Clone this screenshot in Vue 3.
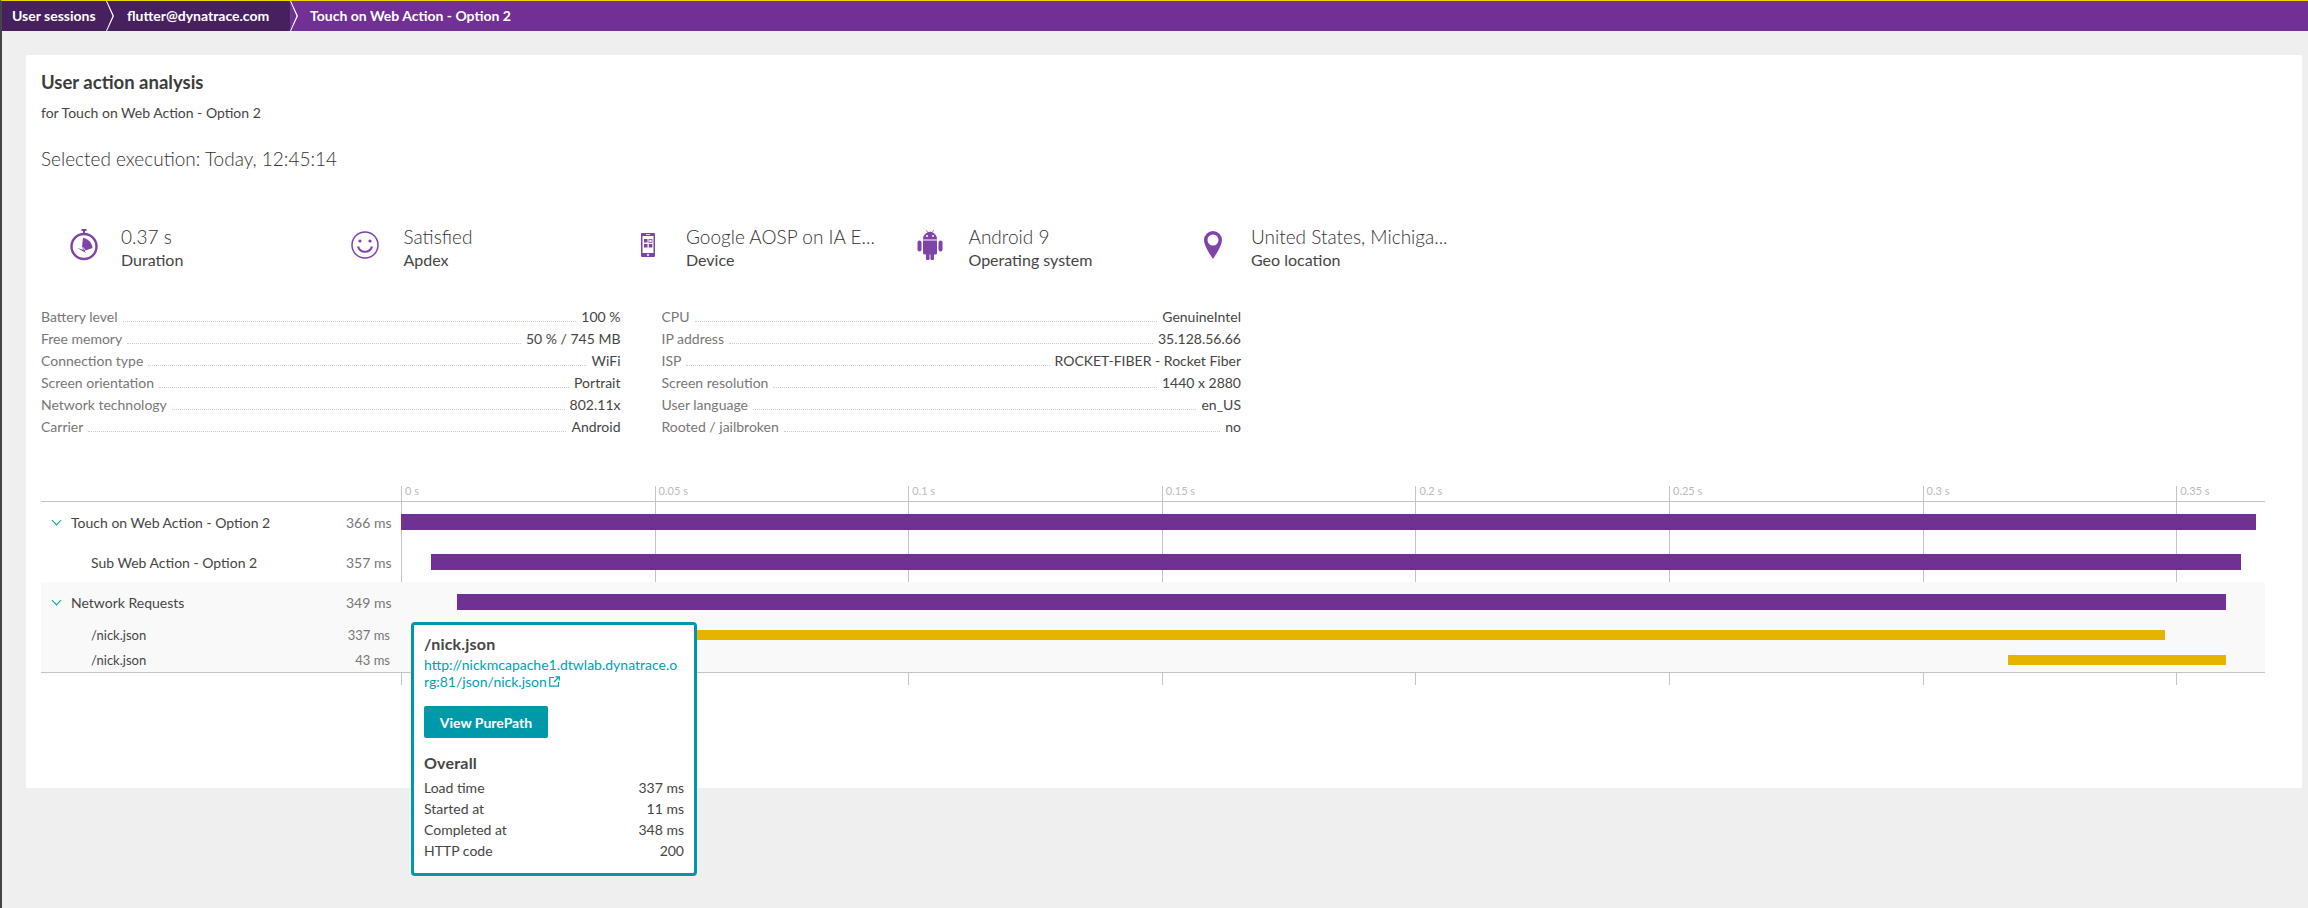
<template>
  <div class="page">
    <nav class="crumbs">
      <div class="crumb dark first">User sessions<span class="chev"></span></div>
      <div class="crumb dark second">flutter@dynatrace.com<span class="chev"></span></div>
      <div class="crumb current">Touch on Web Action - Option 2</div>
    </nav>

    <main class="card">
      <h1>User action analysis</h1>
      <p class="sub">for Touch on Web Action - Option 2</p>
      <p class="selected">Selected execution: Today, 12:45:14</p>

      <section class="metrics">
        <div class="metric">
          <div class="icon">
            <svg width="30" height="32" viewBox="0 0 30 32">
              <rect x="12.500" y="0" width="5" height="2" fill="#7f44a8" />
              <rect x="14" y="2" width="2" height="2" fill="#7f44a8" />
              <circle cx="15" cy="17.500" r="12.500" fill="none" stroke="#7f44a8" stroke-width="2.400" />
              <path d="M14 9 C19 9.500 23 13.500 23.500 19 L15 22 L13 18 Z" fill="#7f44a8" />
              <path d="M8 19 L17 24 L15 21 Z" fill="#7f44a8" />
              <path d="M13.500 18 L16.500 21.500" stroke="#fff" stroke-width=".8" />
            </svg>
          </div>
          <div>
            <div class="value">0.37 s</div>
            <div class="label">Duration</div>
          </div>
        </div>
        <div class="metric">
          <div class="icon">
            <svg width="28" height="28" viewBox="0 0 28 28" fill="none" stroke="#7f44a8" stroke-width="1.500">
              <circle cx="14" cy="14" r="13" />
              <path d="M7 15.500 C9 22.500 19 22.500 21 15.500" stroke-width="2.200" />
              <circle cx="9" cy="10" r="1.600" fill="#7f44a8" stroke="none" />
              <circle cx="19" cy="10" r="1.600" fill="#7f44a8" stroke="none" />
            </svg>
          </div>
          <div>
            <div class="value">Satisfied</div>
            <div class="label">Apdex</div>
          </div>
        </div>
        <div class="metric">
          <div class="icon">
            <svg width="14" height="24" viewBox="0 0 14 24">
              <path fill="#7f44a8" fill-rule="evenodd" d="M1 0h12a1 1 0 0 1 1 1v22a1 1 0 0 1-1 1H1a1 1 0 0 1-1-1V1a1 1 0 0 1 1-1zM1.500 3v17h11V3z" />
              <rect x="5" y="1.200" width="4" height=".8" fill="#fff" />
              <circle cx="7" cy="22" r="1" fill="#fff" />
              <rect x="3" y="6" width="3.500" height="3.500" fill="#7f44a8" />
              <rect x="8" y="6.400" width="3" height="3" fill="none" stroke="#7f44a8" stroke-width=".8" />
              <rect x="3" y="11" width="3.500" height="3.500" fill="#7f44a8" />
              <rect x="7.800" y="11" width="3.500" height="3.500" fill="#7f44a8" />
            </svg>
          </div>
          <div>
            <div class="value">Google AOSP on IA E...</div>
            <div class="label">Device</div>
          </div>
        </div>
        <div class="metric">
          <div class="icon">
            <svg width="26" height="30" viewBox="0 0 26 30" fill="#7f44a8">
              <path d="M6 9.500h14v-.5C20 6 18 3.500 15.500 2.500L17 .3l-.5-.3-1.600 2.200C13.300 1.600 12.700 1.600 11.100 2.200L9.500 0 9 .3l1.500 2.200C8 3.500 6 6 6 9z" />
              <path d="M6 10.500h14V23a1.500 1.500 0 0 1-1.500 1.500H17v4a1.800 1.800 0 0 1-3.600 0v-4h-.8v4a1.800 1.800 0 0 1-3.600 0v-4H7.500A1.500 1.500 0 0 1 6 23z" />
              <rect x="0.500" y="10.500" width="4" height="11" rx="2" />
              <rect x="21.500" y="10.500" width="4" height="11" rx="2" />
              <circle cx="10" cy="6" r="1" fill="#fff" />
              <circle cx="16" cy="6" r="1" fill="#fff" />
            </svg>
          </div>
          <div>
            <div class="value">Android 9</div>
            <div class="label">Operating system</div>
          </div>
        </div>
        <div class="metric">
          <div class="icon">
            <svg width="18" height="28" viewBox="0 0 18 28">
              <path fill="#7f44a8" fill-rule="evenodd" d="M9 0a9 9 0 0 1 9 9c0 5-5 13-9 19C5 22 0 14 0 9A9 9 0 0 1 9 0zm0 3.500a5.500 5.500 0 1 0 0 11 5.500 5.500 0 0 0 0-11z" />
            </svg>
          </div>
          <div>
            <div class="value">United States, Michiga...</div>
            <div class="label">Geo location</div>
          </div>
        </div>
      </section>

      <section class="details">
        <div class="kv-col" v-for="(col, i) in details" :key="i">
          <div class="kv" v-for="row in col" :key="row[0]">
            <span class="k">{{ row[0] }}</span>
            <span class="dots"></span>
            <span class="v">{{ row[1] }}</span>
          </div>
        </div>
      </section>

      <section class="chart">
        <div class="grid-lines">
          <div class="tick" v-for="(t, i) in ticks" :key="t" :style="{ left: i * tickStep + 'px' }">
            <span>{{ t }}</span>
          </div>
        </div>
        <div class="axis"></div>
        <div class="rows">
          <div class="row tall">
            <div class="name"><span class="caret"></span>Touch on Web Action - Option 2</div>
            <div class="ms">366 ms</div>
            <div class="track"><div class="bar purple" :style="bar(401, 2256)"></div></div>
          </div>
          <div class="row tall">
            <div class="name nested">Sub Web Action - Option 2</div>
            <div class="ms">357 ms</div>
            <div class="track"><div class="bar purple" :style="bar(431, 2241)"></div></div>
          </div>
          <div class="shaded">
            <div class="row tall">
              <div class="name"><span class="caret"></span>Network Requests</div>
              <div class="ms">349 ms</div>
              <div class="track"><div class="bar purple" :style="bar(457, 2226)"></div></div>
            </div>
            <div class="row small">
              <div class="name nested">/nick.json</div>
              <div class="ms">337 ms</div>
              <div class="track"><div class="bar yellow" :style="bar(457, 2165)"></div></div>
            </div>
            <div class="row small">
              <div class="name nested">/nick.json</div>
              <div class="ms">43 ms</div>
              <div class="track"><div class="bar yellow" :style="bar(2008, 2226)"></div></div>
            </div>
          </div>
        </div>
      </section>
    </main>

    <aside class="tip">
      <div class="tip-title">/nick.json</div>
      <a class="tip-link">http://nickmcapache1.dtwlab.dynatrace.o<br />rg:81/json/nick.json<svg class="ext" width="11" height="11" viewBox="0 0 11 11" fill="none" stroke="#00a1b2" stroke-width="1.2"><path d="M5 1.500H.8v8.700h8.700V6" /><path d="M5 6l5-5M6.500.8h3.800v3.800" /></svg></a>
      <button class="tip-btn">View PurePath</button>
      <div class="tip-title overall">Overall</div>
      <div class="tip-row" v-for="row in overall" :key="row[0]">
        <span>{{ row[0] }}</span><span>{{ row[1] }}</span>
      </div>
    </aside>
  </div>
</template>

<script setup>
const details = [
  [
    ['Battery level', '100 %'],
    ['Free memory', '50 % / 745 MB'],
    ['Connection type', 'WiFi'],
    ['Screen orientation', 'Portrait'],
    ['Network technology', '802.11x'],
    ['Carrier', 'Android']
  ],
  [
    ['CPU', 'GenuineIntel'],
    ['IP address', '35.128.56.66'],
    ['ISP', 'ROCKET-FIBER - Rocket Fiber'],
    ['Screen resolution', '1440 x 2880'],
    ['User language', 'en_US'],
    ['Rooted / jailbroken', 'no']
  ]
]

const ticks = ['0 s', '0.05 s', '0.1 s', '0.15 s', '0.2 s', '0.25 s', '0.3 s', '0.35 s']
const tickStep = 253.6

const overall = [
  ['Load time', '337 ms'],
  ['Started at', '11 ms'],
  ['Completed at', '348 ms'],
  ['HTTP code', '200']
]

// x positions are page pixels, the track starts at 401
function bar(from, to) {
  return { marginLeft: from - 401 + 'px', width: to - from + 'px' }
}
</script>

<style>
html, body {
  margin: 0;
  background: #efefef;
}
</style>

<style scoped>
.page {
  position: relative;
  height: 908px;
  overflow: hidden;
  box-sizing: border-box;
  border-top: 1px solid #f1d400;
  border-left: 2px solid #454545;
  background: #efefef;
  color: #454545;
  font-family: Lato, "Open Sans", sans-serif;
  font-size: 14px;
}

.crumbs {
  display: flex;
  height: 30px;
  background: #722f94;
  color: #fff;
  font-size: 14px;
  font-weight: 700;
  line-height: 30px;
}

.crumb {
  position: relative;
  box-sizing: border-box;
  white-space: nowrap;
}

.crumb.dark {
  background: #46205f;
}

.first {
  width: 104px;
  padding-left: 10px;
}

.second {
  width: 184px;
  padding-left: 21px;
}

.current {
  padding-left: 20px;
}

.chev {
  position: absolute;
  top: 0;
  right: -8px;
  width: 8px;
  height: 30px;
  background: #fff;
  clip-path: polygon(0 0, 1px 0, 8px 50%, 1px 100%, 0 100%, 6.500px 50%);
  z-index: 1;
}

.card {
  box-sizing: border-box;
  width: 2276px;
  height: 733px;
  margin: 24px 0 0 24px;
  padding: 15px 0 0 15px;
  background: #fff;
  border-radius: 2px;
}

h1 {
  margin: 0;
  color: #3c3c3c;
  font-size: 18.500px;
  font-weight: 700;
  line-height: 24px;
}

.sub {
  margin: 7px 0 0;
  font-size: 14px;
  line-height: 24px;
}

.selected {
  margin: 20px 0 0;
  color: #333;
  font-size: 19px;
  font-weight: 300;
  line-height: 28px;
}

.metrics {
  display: flex;
  margin-top: 51px;
}

.metric {
  display: flex;
  width: 282.500px;
  flex: none;
}

.icon {
  display: flex;
  box-sizing: border-box;
  width: 80px;
  height: 42px;
  flex: none;
  align-items: center;
  justify-content: center;
  padding-left: 5px;
}

.metric + .metric .icon {
  padding-left: 3px;
}

.value {
  color: #333;
  font-size: 19px;
  font-weight: 300;
  line-height: 26px;
  white-space: nowrap;
}

.label {
  font-size: 16px;
  line-height: 20px;
  white-space: nowrap;
}

.details {
  display: flex;
  gap: 41px;
  margin-top: 36px;
}

.kv-col {
  width: 579.500px;
}

.kv {
  display: flex;
  align-items: baseline;
  height: 22px;
  line-height: 22px;
}

.k {
  color: #777;
}

.dots {
  flex: 1;
  margin: 0 5px;
  border-bottom: 1px dotted #ccc;
}

.chart {
  position: relative;
  width: 2224px;
  margin-top: 48px;
  padding-top: 15px;
}

.axis {
  height: 1px;
  background: #c4c4c4;
}

.grid-lines {
  position: absolute;
  top: 0;
  left: 360px;
  height: 199px;
}

.tick {
  position: absolute;
  top: 0;
  width: 1px;
  height: 199px;
  background: #c4c4c4;
}

.tick span {
  position: absolute;
  left: 4px;
  top: -2px;
  color: #bbb;
  font-size: 11px;
  line-height: 14px;
  white-space: nowrap;
}

.rows {
  position: relative;
}

.row {
  display: grid;
  grid-template-columns: 305px 44px 11px 1fr;
  align-items: center;
}

.tall {
  height: 40px;
}

.small {
  height: 25px;
  font-size: 13px;
}

.shaded {
  background: #f9f9f9;
  border-bottom: 1px solid #c4c4c4;
}

.name {
  display: flex;
  align-items: center;
  padding-left: 30px;
  white-space: nowrap;
}

.name.nested {
  padding-left: 50px;
}

.ms {
  grid-column: 2;
  color: #777;
  text-align: right;
  white-space: nowrap;
}

.caret {
  width: 6px;
  height: 6px;
  margin: -3px 11px 0 -18px;
  border-right: 1.500px solid #00a1b2;
  border-bottom: 1.500px solid #00a1b2;
  transform: rotate(45deg);
}

.track {
  grid-column: 4;
  min-width: 0;
}

.bar {
  position: relative;
}

.purple {
  height: 16px;
  background: #6f3294;
}

.yellow {
  height: 10px;
  background: #e4b400;
}

.tip {
  position: absolute;
  left: 409px;
  top: 621px;
  box-sizing: border-box;
  width: 286px;
  height: 254px;
  padding: 9px 10px 0;
  background: #fff;
  border: 3px solid #0097a9;
  border-radius: 4px;
  z-index: 2;
}

.tip-title {
  font-size: 16px;
  font-weight: 700;
  letter-spacing: .2px;
  line-height: 20px;
}

.tip-link {
  display: block;
  margin-top: 2px;
  color: #00a1b2;
  line-height: 17px;
  white-space: nowrap;
}

.ext {
  margin-left: 2px;
  vertical-align: 0;
}

.tip-btn {
  display: block;
  width: 124px;
  height: 32px;
  margin-top: 16px;
  padding: 0;
  border: 0;
  border-radius: 2px;
  background: #0099aa;
  color: #fff;
  font-family: inherit;
  font-size: 14px;
  font-weight: 700;
}

.overall {
  margin-top: 15px;
}

.tip-row {
  display: flex;
  justify-content: space-between;
  height: 21px;
  line-height: 21px;
}

.tip-title.overall + .tip-row {
  margin-top: 4px;
}
</style>
